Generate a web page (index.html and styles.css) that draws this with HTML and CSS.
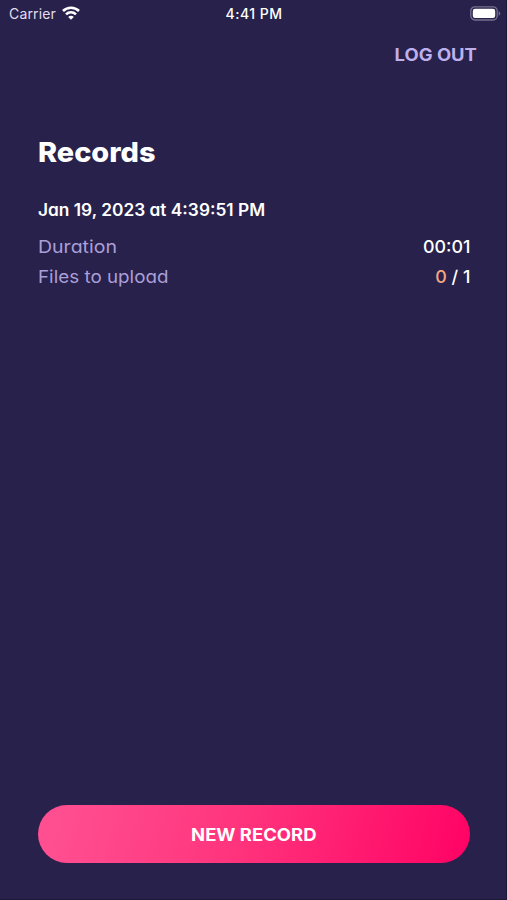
FILE: index.html
```html
<!DOCTYPE html>
<html lang="en">
<head>
<meta charset="utf-8">
<title>Records</title>
<link rel="stylesheet" href="styles.css">
</head>
<body>
<div class="screen">
  <div class="status">
    <div class="carrier"><span class="carrier-name">Carrier</span>
      <svg class="wifi" width="18" height="14" viewBox="0 0 18 14" fill="none" stroke="#fff" stroke-width="2.6"><path d="M1 5C5.4.7 12.6.7 17 5"/><path d="M4 8.4c2.9-2.7 7.1-2.7 10 0"/><path d="M9 13.7 6.2 10.9c1.6-1.5 4-1.5 5.6 0z" fill="#fff" stroke="none"/></svg>
    </div>
    <span class="time">4:41 PM</span>
    <svg class="battery" width="31" height="15" viewBox="0 0 31 15"><rect x=".8" y=".8" width="26.4" height="13.2" rx="4.2" fill="none" stroke="#77718f" stroke-width="1.3"/><rect x="2.8" y="2.8" width="22.4" height="9.2" rx="2.3" fill="#fff"/><path d="M28.7 5.2c2.1.8 2.1 3.6 0 4.4z" fill="#77718f"/></svg>
  </div>
  <header class="toolbar"><span class="logout">LOG OUT</span></header>
  <main class="content">
    <h1 class="title">Records</h1>
    <h2 class="date">Jan 19, 2023 at 4:39:51 PM</h2>
    <div class="row"><span class="label duration">Duration</span><span class="value">00:01</span></div>
    <div class="row"><span class="label">Files to upload</span><span class="value"><span class="pending">0</span> / 1</span></div>
  </main>
  <button class="record"><span class="record-text">NEW RECORD</span></button>
</div>
</body>
</html>
```
FILE: styles.css
```css
* { box-sizing: border-box; }
body { margin: 0; background: #28214b; color: #fff; font-family: Inter, "Open Sans", sans-serif; }
.screen { height: 900px; display: flex; flex-direction: column; padding-bottom: 36px; border-right: 1px solid #1e1839; border-bottom: 1px solid #1e1839; white-space: nowrap; }
.status { height: 28px; display: grid; grid-template-columns: 1fr auto 1fr; align-items: center; padding: 0 5px 1px 9px; font-size: 14px; line-height: 20px; }
.carrier { display: flex; align-items: center; gap: 6px; color: #e3deef; }
.carrier-name { letter-spacing: .15px; }
.wifi { margin-top: -1px; }
.time { font-weight: 500; letter-spacing: .5px; position: relative; left: -1px; }
.battery { justify-self: end; margin-top: -1px; }
.toolbar { height: 54px; display: flex; justify-content: flex-end; padding: 15px 29px 0 0; }
.logout { color: #bdb0ed; font-size: 17px; line-height: 24px; font-weight: 700; transform: scaleX(1.085); transform-origin: right; }
.content { flex: 1; padding: 54px 36px 0 37.5px; font-feature-settings: "cv11"; }
.title { margin: 0; font-size: 27.5px; line-height: 33px; font-weight: 800; transform: scaleX(1.05); transform-origin: left; }
.date { margin: 29px 0 10px; font-size: 17px; line-height: 24px; font-weight: 600; transform: scaleX(1.018); transform-origin: left; }
.row { height: 30px; display: flex; justify-content: space-between; align-items: center; font-size: 17.5px; line-height: 24px; }
.label { color: #aa9fd8; transform: scaleX(1.075); transform-origin: left; }
.duration { transform: scaleX(1.115); }
.value { font-weight: 500; transform: scaleX(1.02); transform-origin: right; }
.pending { color: #f4a783; }
.record { flex: none; height: 58px; margin: 0 36px 0 37.5px; padding: 1px 0 0; border: 0; border-radius: 29px; background: linear-gradient(105deg, #ff4f91 5%, #ff357d 45%, #ff0465 98%); color: #fff; font: 700 17px/24px Inter, "Open Sans", sans-serif; }
.record-text { display: inline-block; transform: scaleX(1.085); }
```
